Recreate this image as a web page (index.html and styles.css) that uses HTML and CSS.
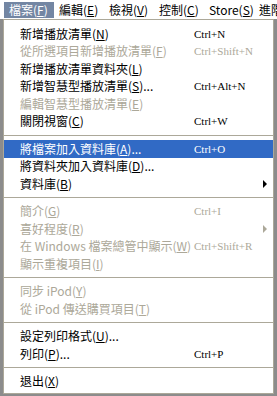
FILE: index.html
```html
<!DOCTYPE html>
<html lang="zh-Hant">
<head>
<meta charset="utf-8">
<link rel="stylesheet" href="styles.css">
</head>
<body>
<div class="screen">
  <div class="menubar">
    <span class="mb-item active">檔案(<u>F</u>)</span>
    <span class="mb-item">編輯(<u>E</u>)</span>
    <span class="mb-item">檢視(<u>V</u>)</span>
    <span class="mb-item">控制(<u>C</u>)</span>
    <span class="mb-item">Store(<u>S</u>)</span>
    <span class="mb-item">進階</span>
  </div>
  <div class="menu">
    <div class="item"><span class="label">新增播放清單(<u>N</u>)</span><span class="key">Ctrl+N</span></div>
    <div class="item disabled"><span class="label">從所選項目新增播放清單(<u>F</u>)</span><span class="key">Ctrl+Shift+N</span></div>
    <div class="item"><span class="label">新增播放清單資料夾(<u>L</u>)</span></div>
    <div class="item"><span class="label">新增智慧型播放清單(<u>S</u>)...</span><span class="key">Ctrl+Alt+N</span></div>
    <div class="item disabled"><span class="label">編輯智慧型播放清單(<u>E</u>)</span></div>
    <div class="item"><span class="label">關閉視窗(<u>C</u>)</span><span class="key">Ctrl+W</span></div>
    <div class="sep"></div>
    <div class="item selected"><span class="label">將檔案加入資料庫(<u>A</u>)...</span><span class="key">Ctrl+O</span></div>
    <div class="item"><span class="label">將資料夾加入資料庫(<u>D</u>)...</span></div>
    <div class="item"><span class="label">資料庫(<u>B</u>)</span><span class="arrow"></span></div>
    <div class="sep"></div>
    <div class="item disabled"><span class="label">簡介(<u>G</u>)</span><span class="key">Ctrl+I</span></div>
    <div class="item disabled"><span class="label">喜好程度(<u>R</u>)</span><span class="arrow"></span></div>
    <div class="item disabled"><span class="label">在 Windows 檔案總管中顯示(<u>W</u>)</span><span class="key">Ctrl+Shift+R</span></div>
    <div class="item disabled"><span class="label">顯示重複項目(<u>I</u>)</span></div>
    <div class="sep"></div>
    <div class="item disabled"><span class="label">同步 iPod(<u>Y</u>)</span></div>
    <div class="item disabled"><span class="label">從 iPod 傳送購買項目(<u>T</u>)</span></div>
    <div class="sep"></div>
    <div class="item"><span class="label">設定列印格式(<u>U</u>)...</span></div>
    <div class="item"><span class="label">列印(<u>P</u>)...</span><span class="key">Ctrl+P</span></div>
    <div class="sep"></div>
    <div class="item"><span class="label">退出(<u>X</u>)</span></div>
  </div>
</div>
</body>
</html>
```
FILE: styles.css
```css
html, body {
  margin: 0;
  padding: 0;
}
body {
  width: 277px;
  height: 396px;
  overflow: hidden;
  background: #8c8c8c;
  font-family: "Noto Sans CJK TC", "Liberation Sans", sans-serif;
  font-size: 12px;
  color: #000;
}
.screen {
  display: flex;
  flex-direction: column;
  width: 277px;
  height: 396px;
}
.menubar {
  display: flex;
  height: 19px;
  box-sizing: border-box;
  padding: 2px 0 1px 4px;
  background: #fff;
  overflow: hidden;
}
.mb-item {
  display: flex;
  align-items: center;
  flex: none;
  height: 16px;
  padding: 0 5px;
  line-height: 16px;
  white-space: nowrap;
  width: 40px;
}
.mb-item.active {
  background: #7386a3;
  color: #fff;
}
.menu {
  margin-left: 3px;
  width: 271px;
  height: 375px;
  box-sizing: border-box;
  background: #fff;
  border: 1px solid #aca899;
  padding: 5px 0 2px 0;
  display: flex;
  flex-direction: column;
}
.item {
  display: flex;
  align-items: center;
  height: 17.5px;
  flex: none;
  padding-left: 16px;
  white-space: nowrap;
  line-height: 14px;
}
.label {
  width: 174px;
  flex: none;
}
.key {
  font-family: "Liberation Serif", serif;
  font-size: 11px;
}
.arrow {
  margin-left: auto;
  margin-right: 6px;
  width: 0;
  height: 0;
  border-left: 4px solid #000;
  border-top: 4px solid transparent;
  border-bottom: 4px solid transparent;
}
.disabled {
  color: #aca899;
}
.disabled .arrow {
  border-left-color: #aca899;
}
.selected {
  background: #316ac5;
  color: #fff;
}
.sep {
  flex: none;
  height: 10px;
  display: flex;
  align-items: center;
}
.sep::before {
  content: "";
  display: block;
  width: 100%;
  height: 1px;
  background: #aca899;
}
u {
  text-decoration: underline;
  text-underline-offset: 1px;
}
```
